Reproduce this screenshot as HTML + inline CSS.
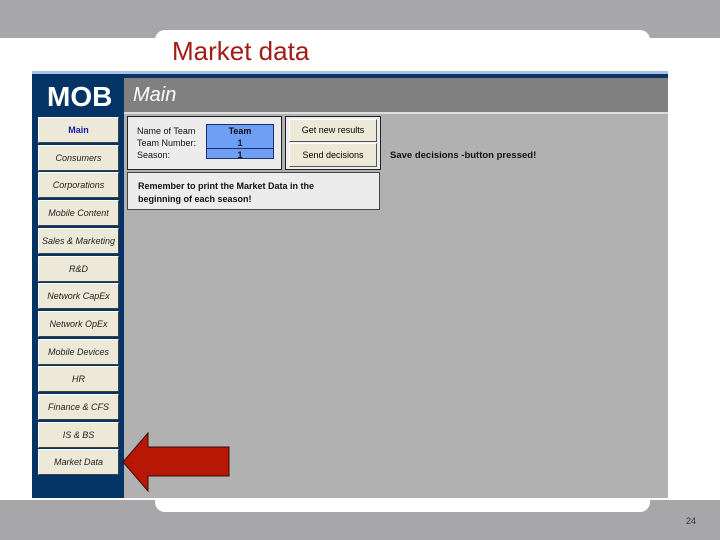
<!DOCTYPE html>
<html><head><style>
*{margin:0;padding:0;box-sizing:border-box}
body{width:720px;height:540px;position:relative;background:#fff;font-family:"Liberation Sans",sans-serif;overflow:hidden}
.abs{position:absolute}
.btn{position:absolute;left:38px;width:81px;height:26px;background:#ece9d8;border:1px solid #fff;border-right-color:#404040;border-bottom-color:#404040;font-size:9px;font-style:italic;color:#222;text-align:center;line-height:24px;white-space:nowrap;overflow:hidden}
.sm{font-size:9px;color:#111}
</style></head><body>
<div class="abs" style="left:0;top:0;width:720px;height:38px;background:#a7a6a9"></div>
<div class="abs" style="left:155px;top:30px;width:495px;height:40px;background:#fff;border-radius:10px 10px 0 0"></div>
<div class="abs" style="left:172px;top:36px;font-size:26px;color:#a01c14">Market data</div>
<div class="abs" style="left:0;top:500px;width:720px;height:40px;background:#a7a6a9"></div>
<div class="abs" style="left:155px;top:490px;width:495px;height:22px;background:#fff;border-radius:0 0 10px 10px"></div>
<div class="abs" style="left:686px;top:516px;font-size:9px;color:#333">24</div>

<div class="abs" style="left:32px;top:71px;width:636px;height:427px;background:#b1b1b1"></div>
<div class="abs" style="left:32px;top:71px;width:636px;height:3px;background:#a8c4e4"></div>
<div class="abs" style="left:32px;top:74px;width:636px;height:4px;background:#0e3462"></div>
<div class="abs" style="left:32px;top:74px;width:92px;height:424px;background:#043466"></div>
<div class="abs" style="left:124px;top:78px;width:544px;height:34px;background:#808080"></div>
<div class="abs" style="left:124px;top:112px;width:544px;height:2px;background:#ddd"></div>
<div class="abs" style="left:47px;top:81px;font-size:28px;font-weight:bold;color:#fff;letter-spacing:0">MOB</div>
<div class="abs" style="left:133px;top:84px;font-size:20px;font-style:italic;color:#fff">Main</div>

<div class="btn" style="top:117px;font-style:normal;font-weight:bold;color:#1a1aa0">Main</div>
<div class="btn" style="top:145px">Consumers</div>
<div class="btn" style="top:172px">Corporations</div>
<div class="btn" style="top:200px">Mobile Content</div>
<div class="btn" style="top:228px">Sales &amp; Marketing</div>
<div class="btn" style="top:256px">R&amp;D</div>
<div class="btn" style="top:283px">Network CapEx</div>
<div class="btn" style="top:311px">Network OpEx</div>
<div class="btn" style="top:339px">Mobile Devices</div>
<div class="btn" style="top:366px">HR</div>
<div class="btn" style="top:394px">Finance &amp; CFS</div>
<div class="btn" style="top:422px">IS &amp; BS</div>
<div class="btn" style="top:449px">Market Data</div>

<div class="abs" style="left:127px;top:116px;width:155px;height:54px;background:#ececec;border:1px solid #222"></div>
<div class="abs sm" style="left:137px;top:125px;line-height:12px">Name of Team<br>Team Number:<br>Season:</div>
<div class="abs" style="left:206px;top:124px;width:68px;height:35px;background:#6f9ff5;border:1px solid #1b3070"></div>
<div class="abs" style="left:206px;top:148px;width:68px;height:1px;background:#1b3070"></div>
<div class="abs sm" style="left:206px;top:125px;width:68px;text-align:center;font-weight:bold;line-height:12px">Team<br>1<br>1</div>
<div class="abs" style="left:285px;top:116px;width:96px;height:54px;background:#ececec;border:1px solid #222"></div>
<div class="abs" style="left:289px;top:119px;width:88px;height:23px;background:#ece9d8;border:1px solid #fff;border-right-color:#555;border-bottom-color:#555;font-size:9px;text-align:center;line-height:21px">Get new results</div>
<div class="abs" style="left:289px;top:143px;width:88px;height:24px;background:#ece9d8;border:1px solid #fff;border-right-color:#555;border-bottom-color:#555;font-size:9px;text-align:center;line-height:22px">Send decisions</div>
<div class="abs" style="left:390px;top:150px;font-size:9.5px;font-weight:bold;color:#111">Save decisions -button pressed!</div>
<div class="abs" style="left:127px;top:172px;width:253px;height:38px;background:#ececec;border:1px solid #444"></div>
<div class="abs sm" style="left:138px;top:180px;font-weight:bold;line-height:13px">Remember to print the Market Data in the<br>beginning of each season!</div>

<svg class="abs" style="left:120px;top:430px" width="115" height="64">
<polygon points="3,32 28,3 28,17 109,17 109,46 28,46 28,61" fill="#b81706" stroke="#3a0a05" stroke-width="1"/>
</svg>
</body></html>
